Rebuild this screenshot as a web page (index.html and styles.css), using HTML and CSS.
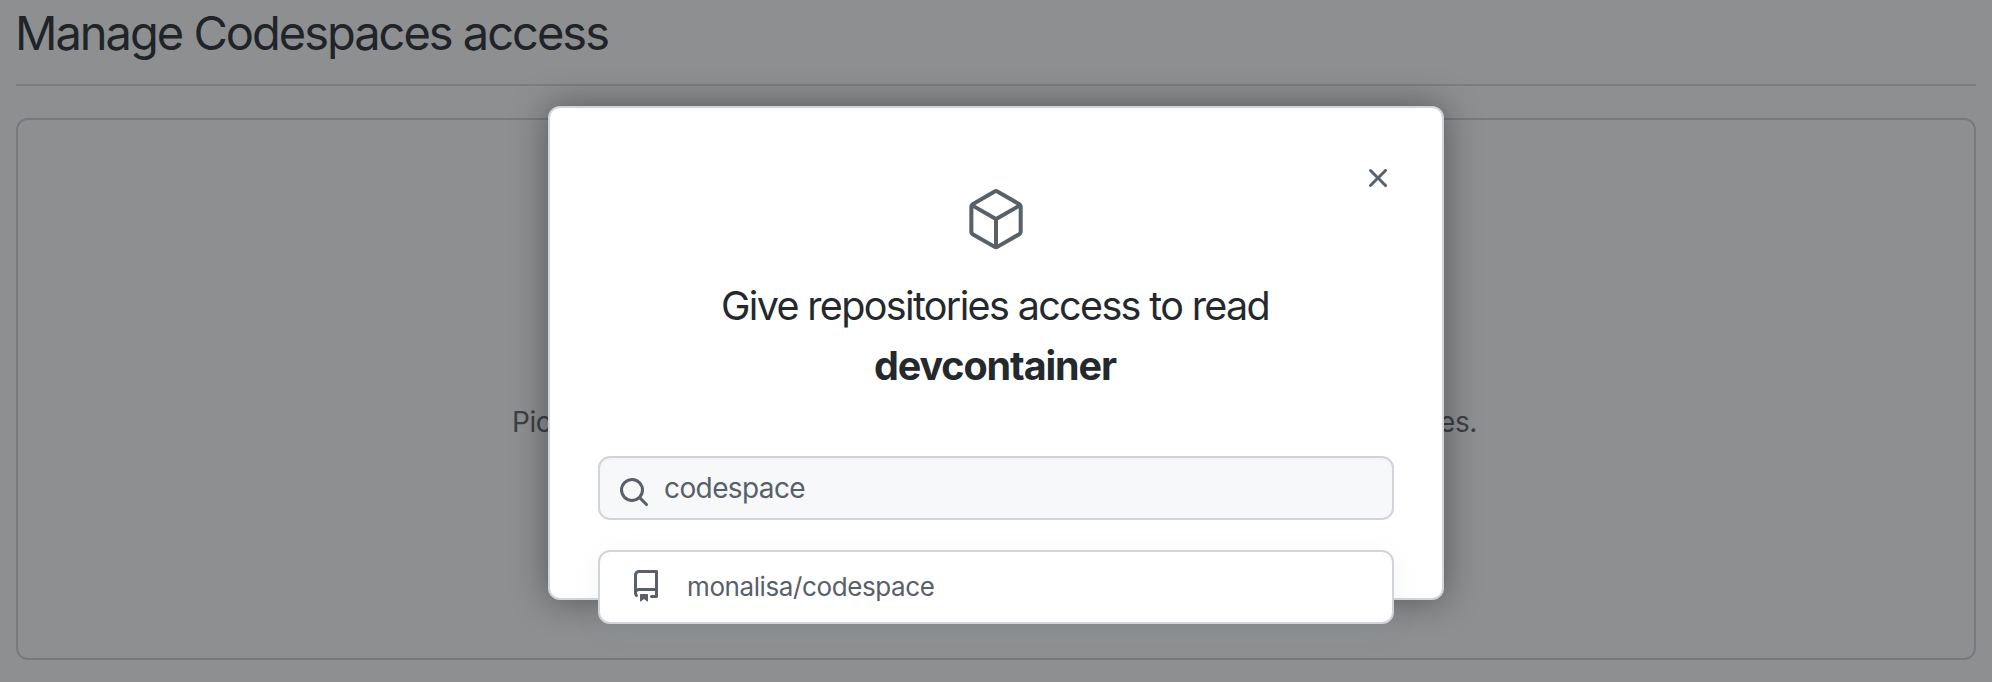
FILE: index.html
```html
<!DOCTYPE html>
<html lang="en">
<head>
<meta charset="utf-8">
<title>Manage Codespaces access</title>
<link rel="stylesheet" href="styles.css">
</head>
<body>
<main class="page">
  <h1 class="page-title"><span class="title-text">Manage Codespaces access</span></h1>
  <section class="blankslate">
    <p class="blankslate-text"><span>Pic</span><span>es.</span></p>
  </section>
</main>
<div class="overlay">
  <div class="dialog" role="dialog" aria-modal="true">
    <button class="close" aria-label="Close">
      <svg width="32" height="32" viewBox="0 0 16 16" fill="currentColor"><path d="M3.72 3.72a.75.75 0 011.06 0L8 6.94l3.22-3.22a.75.75 0 111.06 1.06L9.06 8l3.22 3.22a.75.75 0 11-1.06 1.06L8 9.06l-3.22 3.22a.75.75 0 01-1.06-1.06L6.94 8 3.72 4.78a.75.75 0 010-1.06z"/></svg>
    </button>
    <svg class="package" width="64" height="64" viewBox="0 0 24 24" fill="currentColor"><path fill-rule="evenodd" d="M12.876.64a1.75 1.75 0 00-1.75 0l-8.25 4.762a1.75 1.75 0 00-.875 1.515v9.525c0 .625.334 1.203.875 1.515l8.25 4.763a1.75 1.75 0 001.75 0l8.25-4.762a1.75 1.75 0 00.875-1.516V6.917a1.75 1.75 0 00-.875-1.515L12.876.639zm-1 1.298a.25.25 0 01.25 0l7.625 4.402-7.75 4.474-7.75-4.474 7.625-4.402zM3.501 7.64v8.803c0 .09.048.172.125.216l7.625 4.402v-8.947L3.501 7.64zm9.25 13.421l7.625-4.402a.25.25 0 00.125-.216V7.639l-7.75 4.474v8.947z"/></svg>
    <h2 class="dialog-title"><span class="title-line">Give repositories access to read</span><strong class="title-name">devcontainer</strong></h2>
    <div class="search">
      <svg class="search-icon" width="32" height="32" viewBox="0 0 16 16" fill="currentColor"><path fill-rule="evenodd" d="M11.5 7a4.499 4.499 0 11-8.998 0A4.499 4.499 0 0111.5 7zm-.82 4.74a6 6 0 111.06-1.06l3.04 3.04a.75.75 0 11-1.06 1.06l-3.04-3.04z"/></svg>
      <span class="search-text">codespace</span>
    </div>
    <div class="result">
      <svg class="repo-icon" width="32" height="32" viewBox="0 0 16 16" fill="currentColor"><path fill-rule="evenodd" d="M2 2.5A2.5 2.5 0 014.5 0h8.75a.75.75 0 01.75.75v12.5a.75.75 0 01-.75.75h-2.5a.75.75 0 110-1.5h1.75v-2h-8a1 1 0 00-.714 1.7.75.75 0 01-1.072 1.05A2.495 2.495 0 012 11.5v-9zm10.5-1V9h-8c-.356 0-.694.074-1 .208V2.5a1 1 0 011-1h8zM5 12.25v3.25a.25.25 0 00.4.2l1.45-1.087a.25.25 0 01.3 0L8.6 15.7a.25.25 0 00.4-.2v-3.25a.25.25 0 00-.25-.25h-3.5a.25.25 0 00-.25.25z"/></svg>
      <span class="result-text">monalisa/codespace</span>
    </div>
  </div>
</div>
</body>
</html>
```
FILE: styles.css
```css
* { box-sizing: border-box; }
body {
  margin: 0;
  height: 682px;
  overflow: hidden;
  background: #fff;
  color: #24292e;
  font-family: Inter, "Liberation Sans", sans-serif;
}
.page { padding: 0 16px; }
.page-title {
  margin: 0;
  height: 86px;
  border-bottom: 2px solid #d8dce1;
  font-size: 47px;
  font-weight: 420;
  line-height: 66px;
  letter-spacing: -2px;
  text-indent: -1px;
}
.blankslate {
  display: flex;
  justify-content: center;
  height: 542px;
  margin-top: 32px;
  padding-top: 281px;
  border: 2px solid #d1d5da;
  border-radius: 12px;
}
.blankslate-text {
  display: flex;
  justify-content: space-between;
  width: 968px;
  margin: 0;
  padding-right: 3px;
  color: #586069;
  font-size: 28px;
  font-weight: 420;
  line-height: 42px;
  letter-spacing: -0.4px;
}
.overlay {
  position: absolute;
  inset: 0;
  display: flex;
  justify-content: center;
  align-items: flex-start;
  padding-top: 106px;
  background: rgba(27, 31, 35, 0.5);
}
.dialog {
  position: relative;
  display: flex;
  flex-direction: column;
  align-items: center;
  width: 896px;
  height: 494px;
  padding: 80px 48px 0;
  background: #fff;
  border: 2px solid #d1d5da;
  border-radius: 12px;
  box-shadow: 0 0 36px rgba(0, 0, 0, 0.4);
}
.close {
  position: absolute;
  top: 54px;
  right: 48px;
  display: flex;
  padding: 0;
  border: 0;
  background: none;
  color: #586069;
}
.package, .search-icon, .repo-icon { flex: none; color: #586069; }
.dialog-title {
  display: flex;
  flex-direction: column;
  align-items: center;
  margin: 24px 0 60px;
  font-size: 39.5px;
  font-weight: 420;
  line-height: 60px;
  white-space: nowrap;
}
.title-line { margin-left: -2px; letter-spacing: -1.65px; }
.title-name { margin-left: -2px; font-weight: 650; letter-spacing: -1.1px; }
.search, .result {
  display: flex;
  flex: none;
  align-items: center;
  width: 796px;
  border: 2px solid #d1d5da;
  border-radius: 12px;
  color: #586069;
  font-weight: 420;
}
.search {
  height: 64px;
  padding: 7px 18px 0;
  gap: 14px;
  background: #f6f8fa;
  box-shadow: inset 0 2px 0 rgba(225, 228, 232, 0.2);
}
.search-text {
  padding-bottom: 8px;
  font-size: 28px;
  line-height: 42px;
  letter-spacing: -0.6px;
}
.result {
  height: 74px;
  margin-top: 30px;
  padding: 0 30px;
  gap: 25px;
  background: #fff;
  box-shadow: 0 6px 24px rgba(149, 157, 165, 0.12);
}
.repo-icon { margin-bottom: 2px; }
.result-text {
  font-size: 26px;
  line-height: 40px;
  letter-spacing: -0.4px;
}
```
